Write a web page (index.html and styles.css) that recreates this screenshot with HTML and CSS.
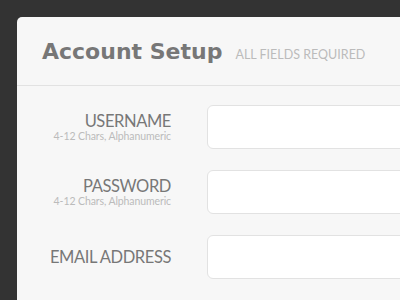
FILE: index.html
```html
<!DOCTYPE html>
<html lang="en">

<head>
    <meta charset="UTF-8">
    <meta name="viewport" content="width=device-width, initial-scale=1.0">
    <title>Account Setup</title>
    <link rel="stylesheet" href="styles.css">
</head>

<body>
    <div class="card">
        <div class="card-head">
            <h1 class="title">Account Setup</h1>
            <span class="note">ALL FIELDS REQUIRED</span>
        </div>
        <form class="form">
            <div class="row">
                <div class="label">
                    <span class="name">USERNAME</span>
                    <span class="hint">4-12 Chars, Alphanumeric</span>
                </div>
                <input class="field" type="text">
            </div>
            <div class="row">
                <div class="label">
                    <span class="name">PASSWORD</span>
                    <span class="hint">4-12 Chars, Alphanumeric</span>
                </div>
                <input class="field" type="password">
            </div>
            <div class="row">
                <div class="label">
                    <span class="name">EMAIL ADDRESS</span>
                </div>
                <input class="field" type="text">
            </div>
        </form>
    </div>
</body>

</html>
```

FILE: styles.css
```css
* {
    margin: 0;
    padding: 0;
    box-sizing: border-box;
}

html,
body {
    width: 100%;
    height: 100%;
    overflow: hidden;
}

body {
    background: #333333;
    font-family: Lato, "Open Sans", sans-serif;
    padding: 17px 0 0 17px;
}

.card {
    width: 440px;
    height: 320px;
    background: #f7f7f7;
    border-radius: 5px 0 0 0;
}

.card-head {
    height: 69px;
    display: flex;
    align-items: baseline;
    padding: 22px 0 0 25px;
    border-bottom: 1px solid #e2e2e2;
}

.title {
    font-family: "DejaVu Sans", sans-serif;
    font-size: 22px;
    font-weight: bold;
    color: #777777;
}

.note {
    margin-left: 13px;
    font-size: 12.5px;
    color: #bbbbbb;
    letter-spacing: 0;
}

.form {
    padding: 19px 0 0 25px;
    display: flex;
    flex-direction: column;
    gap: 21px;
}

.row {
    display: flex;
    align-items: center;
}

.label {
    width: 129px;
    flex-shrink: 0;
    display: flex;
    flex-direction: column;
    align-items: flex-end;
    margin-right: 36px;
}

.name {
    font-size: 16.5px;
    color: #777777;
    line-height: 18px;
    letter-spacing: -0.4px;
}

.hint {
    font-size: 10.5px;
    color: #bbbbbb;
    line-height: 12px;
    letter-spacing: -0.1px;
}

.field {
    flex: 1;
    height: 44px;
    background: #ffffff;
    border: 1px solid #e2e2e2;
    border-radius: 6px;
    outline: none;
}
```
